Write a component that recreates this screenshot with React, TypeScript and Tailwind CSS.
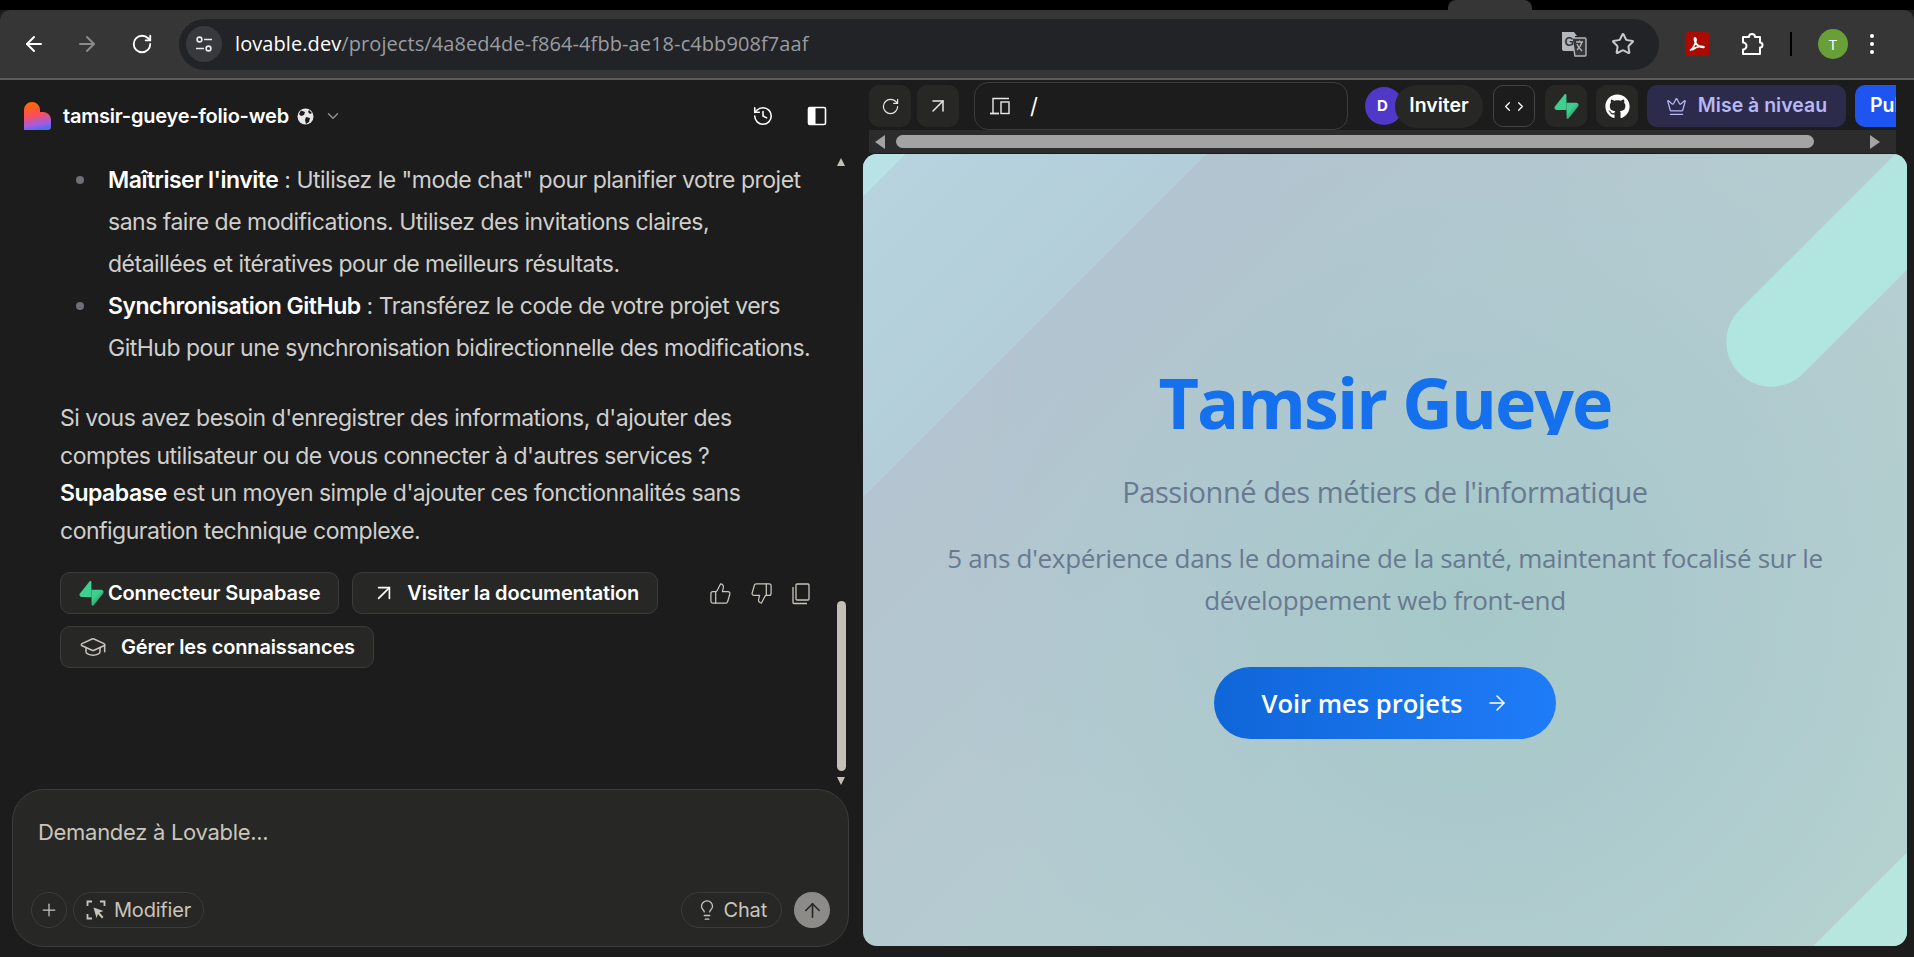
import React from 'react';
import { ArrowLeft, ArrowRight, ArrowUp, ArrowUpRight, ChevronDown, ChevronLeft, ChevronRight, Crown, GraduationCap, History, Lightbulb, Plus, RotateCw, Star, ThumbsDown, ThumbsUp } from 'lucide-react';
import { FaGithub } from 'react-icons/fa';

const SupabaseLogo = ({ size = 24 }: { size?: number }) => (
  <svg width={size} height={size} viewBox="0 0 109 113" className="shrink-0">
    <defs>
      <linearGradient id="supa" x1="0.3" y1="0.4" x2="0.7" y2="0.9">
        <stop offset="0" stopColor="#3ecf8e" />
        <stop offset="1" stopColor="#249361" />
      </linearGradient>
    </defs>
    <path d="M63.7 110.3c-2.9 3.6-8.7 1.6-8.7-3L54 40.1h45.2c8.2 0 12.8 9.500 7.700 15.900z" fill="url(#supa)" />
    <path d="M45.300 2.100c2.900-3.600 8.700-1.600 8.700 2.900l.5 67.300H9.800c-8.200 0-12.700-9.500-7.600-15.900z" fill="#3ecf8e" />
  </svg>
);

const LovableLogo = () => (
  <svg width="27" height="28" viewBox="0 0 27 28" className="shrink-0">
    <defs>
      <linearGradient id="lov" x1="0.3" y1="0" x2="0.5" y2="1">
        <stop offset="0" stopColor="#ff6a00" />
        <stop offset="0.45" stopColor="#fb4f55" />
        <stop offset="0.8" stopColor="#a55be0" />
        <stop offset="1" stopColor="#4f6cf0" />
      </linearGradient>
    </defs>
    <path d="M0 8a8 8 0 0 1 16 0v2h3a8 8 0 0 1 8 8v7a3 3 0 0 1-3 3H0z" fill="url(#lov)" />
  </svg>
);

const PanelIcon = () => (
  <svg width="20" height="20" viewBox="0 0 20 20" fill="none">
    <rect x="1.500" y="1.500" width="17" height="17" rx="1.500" stroke="#fff" strokeWidth="1.600" />
    <rect x="1.500" y="1.500" width="7" height="17" fill="#fff" />
  </svg>
);

const GlobeIcon = () => (
  <svg width="17" height="17" viewBox="0 0 17 17">
    <circle cx="8.500" cy="8.500" r="8" fill="#e8e8e8" />
    <path d="M4 2.500l4 1.500-1 3-3 1-2-2zM9 9l4 1-1 4-3 2-1-4zM12 2l3 3-2 1-2-2z" fill="#1c1c1c" />
  </svg>
);

const TuneIcon = () => (
  <svg width="18" height="18" viewBox="0 0 18 18" fill="none" stroke="#e8eaed" strokeWidth="1.600">
    <circle cx="4.500" cy="4.500" r="2.400" />
    <path d="M9 4.500h8M1 13.500h8" />
    <circle cx="13.500" cy="13.500" r="2.400" />
  </svg>
);

const TranslateIcon = () => (
  <svg width="26" height="26" viewBox="0 0 26 26">
    <path d="M1 1h12l3 4h-2v15H3a2 2 0 0 1-2-2z" fill="#b5b7ba" />
    <path d="M11 7h13a1 1 0 0 1 1 1v16a1 1 0 0 1-1 1H14z" fill="#36373a" stroke="#b5b7ba" strokeWidth="1.400" />
    <path d="M15 11h7M18.500 9.500v1.500M21 11c-1 4-3 6-5 8M16 13c1 3 3 5 5 7" stroke="#b5b7ba" strokeWidth="1.300" fill="none" />
    <text x="3.500" y="15" fontSize="12" fontWeight="700" fill="#36373a" fontFamily="'Liberation Sans', sans-serif">G</text>
  </svg>
);

const PdfIcon = () => (
  <div className="w-[24px] h-[24px] rounded-[3px] bg-[#aa0a00] flex items-center justify-center">
    <svg width="18" height="18" viewBox="0 0 18 18" fill="none" stroke="#fff" strokeWidth="1.700">
      <path d="M2 15.500c2-1 4-4 5.500-8 .6-1.800.6-4-.3-4.500-1-.3-1 2 0 4 1.500 3 4 5 8 5.500 1 .1 1-1 0-1-3-.3-8 1-11 3.500" />
    </svg>
  </div>
);

const PuzzleIcon = () => (
  <svg width="26" height="26" viewBox="0 0 26 26" fill="none" stroke="#fff" strokeWidth="2" strokeLinejoin="round">
    <path d="M3 6h6a3 3 0 0 1 6 0h5v5.500a2.500 2.500 0 0 1 0 5V23H3v-4.500a3.500 3.500 0 0 0 0-7z" />
  </svg>
);

const DeviceIcon = () => (
  <svg width="20" height="18" viewBox="0 0 20 18" fill="none" stroke="#e8e8e8" strokeWidth="1.400">
    <path d="M3 16V1.500h16" />
    <path d="M0 16.500h9" strokeWidth="1.800" />
    <rect x="11" y="5" width="8" height="11.500" />
  </svg>
);

const ModifyIcon = () => (
  <svg width="20" height="20" viewBox="0 0 20 20" fill="none" stroke="#c9c5bc" strokeWidth="1.800">
    <path d="M1.500 6V1.500H6M14 1.500h4.500V6M1.500 14v4.500H6" />
    <path d="M7.500 7.500l10 3.500-4 1.500 4 4.500-1.500 1.500-4-4.500-1.500 4z" fill="#c9c5bc" stroke="none" />
  </svg>
);

const CopyIcon = () => (
  <svg width="20" height="22" viewBox="0 0 20 22" fill="none" stroke="#c9c5bc" strokeWidth="1.300">
    <rect x="5" y="1" width="13" height="16" rx="1" />
    <path d="M2 4v15.500a1 1 0 0 0 1 1h13" />
  </svg>
);

const ScrollTriangle = ({ dir }: { dir: 'up' | 'down' }) => (
  <svg width="10" height="8" viewBox="0 0 10 8" fill="#c4c0b8">
    {dir === 'up' ? <path d="M5 0l4 8H1z" /> : <path d="M5 8L1 0h8z" />}
  </svg>
);

const ActionButton = ({ icon, label, gap }: { icon: React.ReactNode; label: string; gap: string }) => (
  <button className={`h-[42px] pl-[18px] pr-[18px] flex items-center ${gap} rounded-[10px] border border-[#3b3b39] bg-[#272725] text-white text-[20px] font-semibold tracking-[-0.15px] whitespace-nowrap`}>
    {icon}
    {label}
  </button>
);

const ToolSquare = ({ children, className = '' }: { children: React.ReactNode; className?: string }) => (
  <div className={`w-[42px] h-[42px] rounded-[10px] flex items-center justify-center shrink-0 ${className}`}>{children}</div>
);

export default function App() {
  return (
    <div className="w-[1914px] h-[957px] bg-[#1c1c1c] flex flex-col overflow-hidden font-['Inter',sans-serif]">
      {/* tab strip */}
      <div className="h-[10px] bg-black flex justify-end shrink-0">
        <div className="w-[84px] h-[10px] bg-[#363636] mr-[382px] rounded-t-[8px]"></div>
      </div>

      {/* chrome toolbar */}
      <div className="h-[70px] bg-[#363636] rounded-t-[10px] border-b-2 border-[#5c5c5c] flex items-center pl-[22px] shrink-0 font-['Open_Sans',sans-serif]">
        <ArrowLeft size={24} color="#fff" strokeWidth={2} />
        <ArrowRight size={24} color="#8a8a8a" strokeWidth={2} className="ml-[29px]" />
        <RotateCw size={22} color="#fff" strokeWidth={2} className="ml-[32px]" />
        <div className="ml-[26px] w-[1480px] h-[51px] rounded-full bg-[#212327] flex items-center pl-[7px] pr-[24px]">
          <div className="w-[36px] h-[36px] rounded-full bg-[#38393c] flex items-center justify-center shrink-0">
            <TuneIcon />
          </div>
          <span className="ml-[13px] text-[20px] tracking-[0.08px] text-white">lovable.dev<span className="text-[#9a9ca0]">/projects/4a8ed4de-f864-4fbb-ae18-c4bb908f7aaf</span></span>
          <div className="ml-auto flex items-center gap-[24px]">
            <TranslateIcon />
            <Star size={24} color="#c6c8cb" strokeWidth={2} />
          </div>
        </div>
        <div className="ml-[26px]"><PdfIcon /></div>
        <div className="ml-[31px]"><PuzzleIcon /></div>
        <div className="ml-[24px] w-[2px] h-[24px] bg-black"></div>
        <div className="ml-[26px] w-[30px] h-[30px] rounded-full bg-[#689f38] text-white text-[15px] flex items-center justify-center">T</div>
        <div className="ml-[22px] flex flex-col gap-[4px]">
          <div className="w-[4px] h-[4px] rounded-full bg-white"></div>
          <div className="w-[4px] h-[4px] rounded-full bg-white"></div>
          <div className="w-[4px] h-[4px] rounded-full bg-white"></div>
        </div>
      </div>

      <div className="flex-1 flex min-h-0">
        {/* left chat panel */}
        <div className="w-[863px] shrink-0 flex flex-col">
          <div className="h-[72px] flex items-center pl-[24px] pr-[36px] shrink-0">
            <LovableLogo />
            <span className="ml-[12px] text-[20px] font-semibold text-white tracking-[-0.2px]">tamsir-gueye-folio-web</span>
            <span className="ml-[8px]"><GlobeIcon /></span>
            <ChevronDown size={18} color="#8e8e8c" className="ml-[10px]" />
            <div className="ml-auto flex items-center gap-[33px]">
              <History size={22} color="#fff" strokeWidth={1.700} />
              <PanelIcon />
            </div>
          </div>

          <div className="relative flex-1 min-h-0 overflow-hidden pl-[60px] pr-[40px] text-[23px] tracking-[-0.5px] text-[#cfcfcd]">
            <ul className="leading-[42px] mt-[7px] pr-[11px]">
              <li className="flex">
                <div className="w-[8px] h-[8px] rounded-full bg-[#6f6f78] mt-[17px] ml-[16px] mr-[24px] shrink-0"></div>
                <div><strong className="text-white font-semibold">Maîtriser l'invite</strong> : Utilisez le "mode chat" pour planifier votre projet sans faire de modifications. Utilisez des invitations claires, détaillées et itératives pour de meilleurs résultats.</div>
              </li>
              <li className="flex">
                <div className="w-[8px] h-[8px] rounded-full bg-[#6f6f78] mt-[17px] ml-[16px] mr-[24px] shrink-0"></div>
                <div><strong className="text-white font-semibold">Synchronisation GitHub</strong> : Transférez le code de votre projet vers GitHub pour une synchronisation bidirectionnelle des modifications.</div>
              </li>
            </ul>
            <p className="mt-[31px] leading-[37.500px]">
              Si vous avez besoin d'enregistrer des informations, d'ajouter des comptes utilisateur ou de vous connecter à d'autres services ?<br />
              <strong className="text-white font-semibold">Supabase</strong> est un moyen simple d'ajouter ces fonctionnalités sans configuration technique complexe.
            </p>
            <div className="mt-[22px] flex items-start">
              <div className="flex flex-wrap gap-x-[13px] gap-y-[12px] w-[620px]">
                <ActionButton icon={<SupabaseLogo size={25} />} gap="gap-[4px]" label="Connecteur Supabase" />
                <ActionButton icon={<ArrowUpRight size={26} strokeWidth={1.500} />} gap="gap-[10px]" label="Visiter la documentation" />
                <ActionButton icon={<GraduationCap size={28} color="#c9c5bc" strokeWidth={1.300} />} gap="gap-[14px]" label="Gérer les connaissances" />
              </div>
              <div className="ml-[29px] flex items-center gap-[18px] pt-[10px] text-[#c9c5bc]">
                <ThumbsUp size={23} strokeWidth={1.300} />
                <ThumbsDown size={23} strokeWidth={1.300} />
                <CopyIcon />
              </div>
            </div>
            {/* scrollbar */}
            <div className="absolute right-[17px] top-[6px]"><ScrollTriangle dir="up" /></div>
            <div className="absolute right-[17px] top-[449px] w-[9px] h-[170px] rounded-full bg-[#c4c0b8]"></div>
            <div className="absolute right-[17px] top-[625px]"><ScrollTriangle dir="down" /></div>
          </div>

          <div className="mx-[12px] mr-[14px] mb-[10px] h-[158px] shrink-0 rounded-[32px] border border-[#3c3c3a] bg-[#272725] flex flex-col px-[18px] pt-[28px] pb-[18px]">
            <div className="pl-[7px] text-[22px] leading-[28px] tracking-[-0.3px] text-[#c9c5bc]">Demandez à Lovable...</div>
            <div className="mt-auto flex items-center text-[#c9c5bc]">
              <div className="w-[36px] h-[36px] rounded-full border border-[#3c3c3a] flex items-center justify-center">
                <Plus size={20} strokeWidth={1.500} />
              </div>
              <div className="ml-[6px] h-[36px] px-[12px] rounded-full border border-[#3c3c3a] flex items-center gap-[8px] text-[20px] tracking-[-0.2px]">
                <ModifyIcon />
                Modifier
              </div>
              <div className="ml-auto h-[36px] px-[14px] rounded-full border border-[#3c3c3a] flex items-center gap-[6px] text-[20px] tracking-[-0.2px]">
                <Lightbulb size={22} strokeWidth={1.400} />
                Chat
              </div>
              <div className="ml-[12px] w-[36px] h-[36px] rounded-full bg-[#8c8b88] flex items-center justify-center">
                <ArrowUp size={23} color="#262624" strokeWidth={1.700} />
              </div>
            </div>
          </div>
        </div>

        {/* right preview panel */}
        <div className="flex-1 min-w-0 flex flex-col">
          <div className="h-[50px] w-[1027px] ml-[6px] flex items-center overflow-hidden shrink-0 pt-[2px]">
            <ToolSquare className="bg-[#272725]"><RotateCw size={19} color="#e8e8e8" strokeWidth={1.500} /></ToolSquare>
            <ToolSquare className="bg-[#272725] ml-[6px]"><ArrowUpRight size={24} color="#e8e8e8" strokeWidth={1.500} /></ToolSquare>
            <div className="ml-[15px] w-[374px] h-[48px] rounded-[14px] border border-[#3c3c3a] flex items-center pl-[15px] gap-[20px] text-[22px] text-white shrink-0">
              <DeviceIcon />
              /
            </div>
            <div className="ml-[17px] w-[38px] h-[38px] rounded-full bg-[#5038c8] text-white text-[15px] font-bold flex items-center pl-[12px] shrink-0">D</div>
            <div className="-ml-[8px] w-[88px] h-[43px] rounded-full bg-[#272725] text-white text-[19.500px] font-semibold flex items-center justify-center shrink-0 relative">Inviter</div>
            <ToolSquare className="ml-[10px] border border-[#444442] bg-[#1c1c1c]">
              <ChevronLeft size={15} color="#fff" strokeWidth={2} className="-mr-[1px]" />
              <ChevronRight size={15} color="#fff" strokeWidth={2} className="-ml-[1px]" />
            </ToolSquare>
            <ToolSquare className="ml-[10px] bg-[#272725]"><SupabaseLogo size={25} /></ToolSquare>
            <ToolSquare className="ml-[9px] bg-[#272725]"><FaGithub size={25} color="#fff" /></ToolSquare>
            <div className="ml-[9px] w-[199px] h-[42px] rounded-[10px] bg-[#2c2b4b] text-[#b6b7f5] text-[19.500px] font-semibold flex items-center justify-center gap-[11px] shrink-0">
              <Crown size={21} strokeWidth={1.400} />
              Mise à niveau
            </div>
            <div className="ml-[9px] w-[80px] h-[42px] rounded-[10px] bg-[#1e55f0] text-white text-[19.500px] font-semibold flex items-center pl-[15px] shrink-0">Publier</div>
          </div>

          <div className="w-[1027px] ml-[6px] h-[23px] bg-[#2c2c2c] flex items-center pl-[6px] shrink-0">
            <div className="w-0 h-0 border-y-[7px] border-y-transparent border-r-[10px] border-r-[#a3a3a3]"></div>
            <div className="ml-[11px] w-[918px] h-[13px] rounded-full bg-[#a3a3a3]"></div>
            <div className="ml-[56px] w-0 h-0 border-y-[7px] border-y-transparent border-l-[10px] border-l-[#a3a3a3]"></div>
          </div>

          {/* site preview */}
          <div className="relative w-[1044px] h-[792px] mt-[1px] rounded-[14px] overflow-hidden bg-[radial-gradient(circle_at_58%_58%,#a6c8c8_0%,rgba(170,200,205,0.7)_35%,transparent_70%),linear-gradient(135deg,#b3c4d2,#b6d3cf)] flex flex-col items-center font-['Open_Sans',sans-serif]">
            <div className="absolute inset-0 bg-[linear-gradient(135deg,#b8e2e5_30px,#b6d3de_30px,#b3ced9_243px,rgba(180,190,205,0.35)_243px,transparent_620px,transparent_1232px,#b6e6dd_1232px)]"></div>
            <div className="absolute left-[980px] -top-[139px] w-[90px] h-[420px] rounded-full bg-[#b0e6df] rotate-45"></div>
            <h1 className="relative mt-[203px] h-[78px] overflow-hidden text-[70px] leading-[90px] font-bold text-[#1570ee] tracking-[-2px]">Tamsir Gueye</h1>
            <p className="relative mt-[37px] text-[29px] leading-[40px] text-[#687a90] tracking-[-0.45px]">Passionné des métiers de l'informatique</p>
            <p className="relative mt-[25px] w-[900px] text-center text-[26px] leading-[42px] text-[#687a90] tracking-[-0.3px]">5 ans d'expérience dans le domaine de la santé, maintenant focalisé sur le développement web front-end</p>
            <button className="relative mt-[46px] w-[342px] h-[72px] rounded-full bg-gradient-to-r from-[#0f66d8] to-[#1f7cf8] text-white text-[25.500px] font-semibold flex items-center justify-center gap-[22px]">
              <span className="mt-[1px]">Voir mes projets</span>
              <ArrowRight size={24} strokeWidth={1.500} />
            </button>
          </div>
        </div>
      </div>
    </div>
  );
}
